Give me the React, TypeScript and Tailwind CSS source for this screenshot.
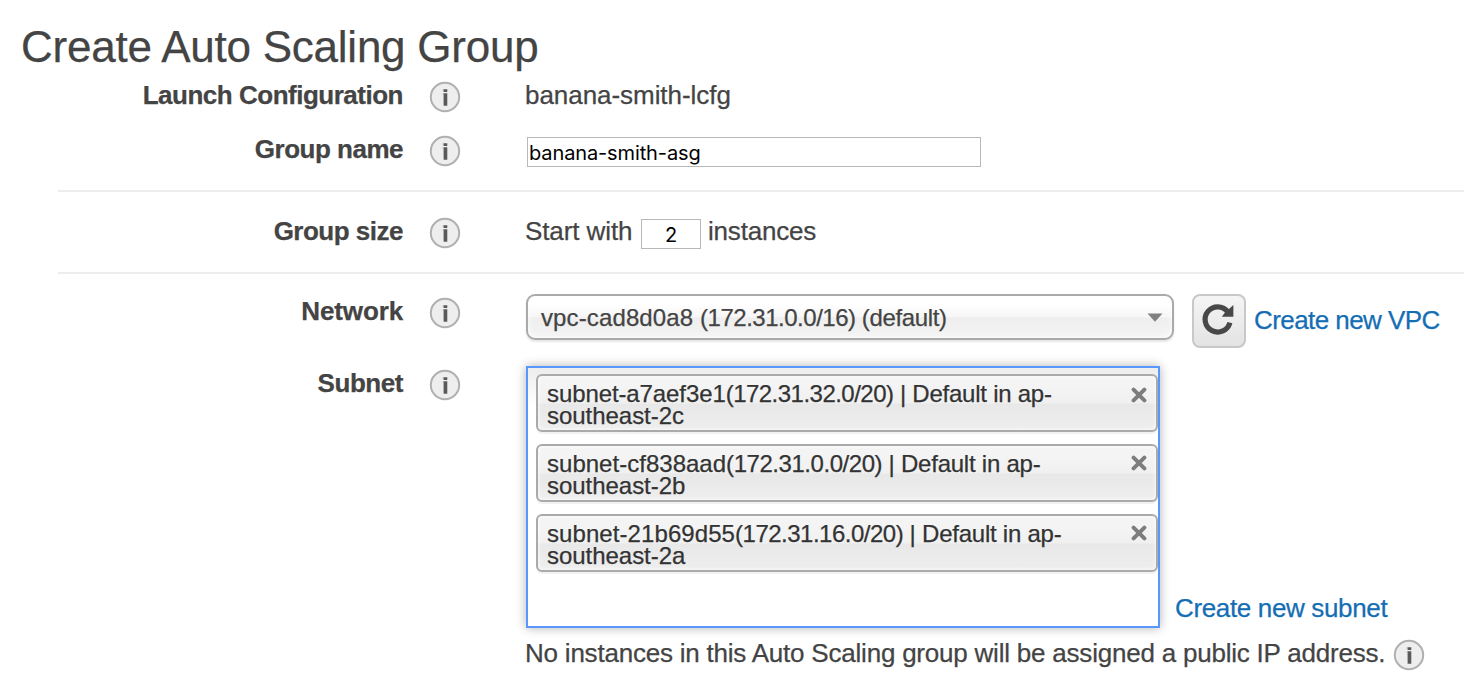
import type { ReactNode } from "react";

const SUBNETS = [
  {
    name: "subnet-a7aef3e1",
    cidr: "(172.31.32.0/20)",
    zone: "southeast-2c",
    closeTop: "pt-[11px]",
    nameSpacing: "tracking-[-0.1px]",
    cidrSpacing: "tracking-[-0.52px]",
  },
  {
    name: "subnet-cf838aad",
    cidr: "(172.31.0.0/20)",
    zone: "southeast-2b",
    closeTop: "pt-[9px]",
    nameSpacing: "tracking-[0.02px]",
    cidrSpacing: "tracking-[-0.45px]",
  },
  {
    name: "subnet-21b69d55",
    cidr: "(172.31.16.0/20)",
    zone: "southeast-2a",
    closeTop: "pt-[9px]",
    nameSpacing: "tracking-[0.08px]",
    cidrSpacing: "tracking-[-0.5px]",
  },
];

function InfoIcon() {
  return (
    <svg className="block size-8 shrink-0" viewBox="0 0 32 32" aria-hidden="true">
      <circle cx="16" cy="16" r="14.2" fill="#eeeeee" stroke="#b0b0b0" strokeWidth="2" />
      <path d="M14.6 8.2H18.3V10.9H14.6ZM14.6 12.3H18.3V24.8H14.6Z" fill="#5a5a5a" />
      <path d="M13.8 8.2H14.6V10H13.8ZM13.8 12.3H14.6V14H13.8Z" fill="#a0a0a0" />
    </svg>
  );
}

function CloseIcon() {
  return (
    <svg className="block size-4" viewBox="0 0 16 16" aria-hidden="true">
      <path d="M2.6 2.6 13.4 13.4M13.4 2.6 2.6 13.4" stroke="#7d7d7d" strokeWidth="4" strokeLinecap="round" />
    </svg>
  );
}

function RefreshIcon() {
  return (
    <svg className="block size-8 overflow-visible" viewBox="0 0 32 32" aria-hidden="true">
      <path d="M26.9 18.6A12.6 12.6 0 1 1 24.6 7.6" fill="none" stroke="#484848" strokeWidth="5.2" />
      <path d="M30.4 1V12.8H18.8L22 8.5Z" fill="#484848" />
    </svg>
  );
}

function Row({
  label,
  spacing = "tracking-[-0.45px]",
  className,
  children,
}: {
  label: string;
  spacing?: string;
  className: string;
  children: ReactNode;
}) {
  return (
    <div className={`flex items-start ${className}`}>
      <div className={`w-[403px] shrink-0 text-right font-bold ${spacing}`}>{label}</div>
      <div className="ml-[26px] mr-[64px] pt-px">
        <InfoIcon />
      </div>
      {children}
    </div>
  );
}

export default function App() {
  return (
    <main className="h-[696px] w-[1464px] overflow-hidden whitespace-nowrap bg-white pt-[22px] font-['Liberation_Sans',Arial,sans-serif] text-[26px] leading-[30px] text-[#444] [-webkit-text-stroke:0.25px]">
      <h1 className="h-[58px] pl-[21px] text-[44px] leading-[50px] tracking-[-0.24px]">Create Auto Scaling Group</h1>

      <Row label="Launch Configuration" spacing="tracking-[-0.49px]" className="h-[54px]">
        <span className="tracking-[-0.05px]">banana-smith-lcfg</span>
      </Row>
      <Row label="Group name" spacing="tracking-[-0.5px]" className="h-14">
        <input
          className="ml-[2px] mt-[3px] h-[30px] w-[454px] border border-[#b8b8b8] bg-white pl-px pt-px font-[Inter,sans-serif] text-[20px] tracking-[-0.12px] text-black outline-none [-webkit-text-stroke:0px]"
          defaultValue="banana-smith-asg"
          aria-label="Group name"
        />
      </Row>
      <hr className="ml-[58px] h-[2px] border-0 bg-[#ededed]" />
      <Row label="Group size" spacing="tracking-[-0.5px]" className="mt-6 h-14">
        <span className="w-[108px] tracking-[-0.1px]">Start with</span>
        <input
          className="ml-2 mt-[3px] h-[30px] w-[60px] border border-[#b8b8b8] bg-white pt-px text-center font-[Inter,sans-serif] text-[20px] text-black outline-none [-webkit-text-stroke:0px]"
          defaultValue="2"
          aria-label="Number of instances"
        />
        <span className="ml-[7px] tracking-[-0.2px]">instances</span>
      </Row>
      <hr className="ml-[58px] h-[2px] border-0 bg-[#ededed]" />
      <Row label="Network" spacing="tracking-[-0.12px]" className="mt-[22px] h-[72px]">
        <div className="-mt-[2px] ml-px flex items-start">
          <button className="flex h-[46px] w-[648px] items-center justify-between rounded-[9px] border-2 border-[#aaa] bg-[linear-gradient(#fff_20%,#f6f6f6_50%,#eee_52%,#f4f4f4_100%)] pl-[13px] pr-[9px] text-[24px] shadow-[inset_0_0_6px_#fff,0_2px_2px_rgba(0,0,0,0.1)]">
            <span className="pt-[2px]">
              <span className="tracking-[0.12px]">vpc-cad8d0a8 </span>
              <span className="tracking-[-0.48px]">(172.31.0.0/16) </span>
              <span className="tracking-[-0.35px]">(default)</span>
            </span>
            <svg className="mt-px block h-[9px] w-4" viewBox="0 0 16 9" aria-hidden="true">
              <path d="M0.5 0.5H15.5L8 8.8Z" fill="#808080" />
            </svg>
          </button>
          <button
            className="ml-[18px] flex size-[54px] justify-center rounded-[8px] border-2 border-[#c8c8c8] bg-[linear-gradient(#f5f5f5,#e3e3e3)] pt-2"
            aria-label="Refresh"
          >
            <RefreshIcon />
          </button>
          <a className="ml-2 mt-[11px] tracking-[-0.57px] text-[#146eb4]">Create new VPC</a>
        </div>
      </Row>
      <Row label="Subnet" className="h-[270px]">
        <div className="-mt-[2px] ml-px flex h-[262px] items-end">
          <div className="flex h-[262px] w-[634px] flex-col gap-3 border-2 border-[#5897fb] bg-[linear-gradient(#eee_1%,#fff_15%)] pl-2 pt-[6px] shadow-[0_0_10px_rgba(0,0,0,0.3)]">
            {SUBNETS.map((s) => (
              <div
                key={s.name}
                className="flex h-[58px] w-[622px] shrink-0 justify-between rounded-[6px] border-2 border-[#aaa] bg-[linear-gradient(#f4f4f4_20%,#f0f0f0_50%,#e8e8e8_52%,#eee_100%)] pl-[9px] pr-[9px] text-[24px] leading-[22px] text-[#333] shadow-[inset_0_0_4px_#fff,0_2px_0_rgba(0,0,0,0.05)]"
              >
                <div className="pt-[7px] tracking-[-0.24px]">
                  <span className={s.nameSpacing}>{s.name}</span>
                  <span className={s.cidrSpacing}>{s.cidr}</span> | Default in ap-
                  <br />
                  <span className="tracking-[-0.04px]">{s.zone}</span>
                </div>
                <div className={s.closeTop}>
                  <CloseIcon />
                </div>
              </div>
            ))}
          </div>
          <a className="mb-[5px] ml-[15px] tracking-[-0.35px] text-[#146eb4]">Create new subnet</a>
        </div>
      </Row>
      <div className="flex items-start pl-[525px]">
        <span className="w-[868px] tracking-[-0.215px]">
          No instances in this Auto Scaling group will be assigned a public IP address.
        </span>
        <div className="pt-px">
          <InfoIcon />
        </div>
      </div>
    </main>
  );
}
